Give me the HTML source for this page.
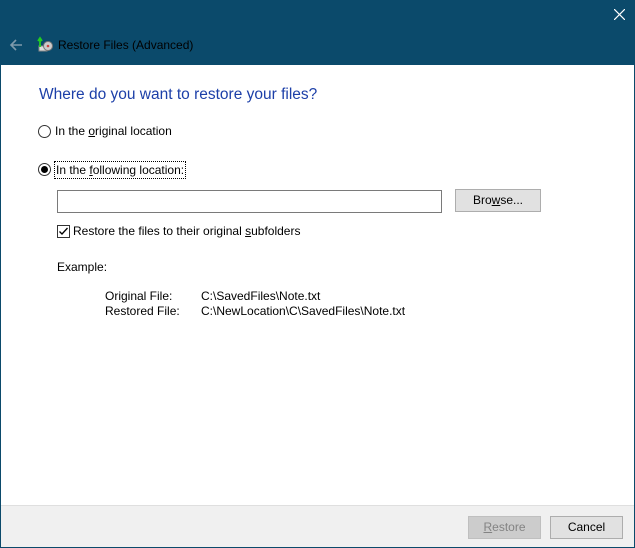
<!DOCTYPE html>
<html><head><meta charset="utf-8"><style>
*{margin:0;padding:0;box-sizing:border-box}
body{width:635px;height:548px;overflow:hidden;font-family:"Segoe UI","Liberation Sans",sans-serif;font-size:12px;color:#000;background:#0b4a6b;position:relative}
.win{position:absolute;left:1px;top:0;width:633px;height:547px;background:#fff}
.tb{position:absolute;left:0;top:0;width:633px;height:65px;background:#0b4a6b}
.t{position:absolute;top:38px;font-size:12px}
.foot{position:absolute;left:0;top:505px;width:633px;height:42px;background:#f0f0f0;border-top:1px solid #dfdfdf}
.btn{position:absolute;height:23px;border:1px solid #adadad;background:#e1e1e1;text-align:center;line-height:21px;font-size:12px}
.a{position:absolute;white-space:nowrap}
u{text-decoration:underline}
</style></head><body>
<div class="win">
<div class="tb">
<svg style="position:absolute;left:8px;top:38px" width="14" height="14" viewBox="0 0 14 14"><path d="M13 7H2M7 2L2 7l5 5" stroke="#7f9aab" stroke-width="1.6" fill="none"/></svg>
<svg style="position:absolute;left:36px;top:36px" width="16" height="17" viewBox="0 0 16 17"><rect x="2" y="10" width="8" height="5" fill="#ddd" stroke="#888"/><circle cx="11" cy="10" r="4.5" fill="#ccc" stroke="#777"/><circle cx="11" cy="10" r="1.3" fill="#c44"/><path d="M3 11V3M1 5l2-3 2 3" stroke="#2c2" stroke-width="1.8" fill="none"/></svg>
<div class="a" style="left:57px;top:38px;color:#000">Restore Files (Advanced)</div>
<svg style="position:absolute;left:613px;top:9px" width="11" height="11" viewBox="0 0 11 11"><path d="M0 0L11 11M11 0L0 11" stroke="#fff" stroke-width="1.2"/></svg>
</div>
<div class="a" style="left:38px;top:86px;font-size:15.5px;color:#1c3fa8">Where do you want to restore your files?</div>
<div class="a" style="left:37px;top:125px;width:13px;height:13px;border:1px solid #333;border-radius:50%;background:#fff"></div>
<div class="a" style="left:54px;top:124px">In the <u>o</u>riginal location</div>
<div class="a" style="left:37px;top:163px;width:13px;height:13px;border:1px solid #333;border-radius:50%;background:#fff"><div style="position:absolute;left:2px;top:2px;width:7px;height:7px;border-radius:50%;background:#000"></div></div>
<div class="a" style="left:53px;top:161px;border:1px dotted #000;padding:0 1px;line-height:16px">In the <u>f</u>ollowing location:</div>
<div class="a" style="left:56px;top:190px;width:385px;height:23px;border:1px solid #7a7a7a;background:#fff"></div>
<div class="btn" style="left:454px;top:189px;width:86px">Bro<u>w</u>se...</div>
<div class="a" style="left:56px;top:225px;width:13px;height:13px;border:1px solid #333;background:#fff"><svg width="11" height="11" viewBox="0 0 11 11" style="position:absolute;left:0;top:0"><path d="M1.5 5.5l2.5 2.5 5.5-6" stroke="#000" stroke-width="1.3" fill="none"/></svg></div>
<div class="a" style="left:72px;top:224px">Restore the files to their original <u>s</u>ubfolders</div>
<div class="a" style="left:56px;top:260px">Example:</div>
<div class="a" style="left:104px;top:289px">Original File:</div>
<div class="a" style="left:104px;top:304px">Restored File:</div>
<div class="a" style="left:200px;top:289px">C:\SavedFiles\Note.txt</div>
<div class="a" style="left:200px;top:304px">C:\NewLocation\C\SavedFiles\Note.txt</div>
<div class="foot">
<div class="btn" style="left:467px;top:10px;width:73px;background:#ccc;border-color:#bfbfbf;color:#838383"><u>R</u>estore</div>
<div class="btn" style="left:549px;top:10px;width:73px">Cancel</div>
</div>
</div>
</body></html>
